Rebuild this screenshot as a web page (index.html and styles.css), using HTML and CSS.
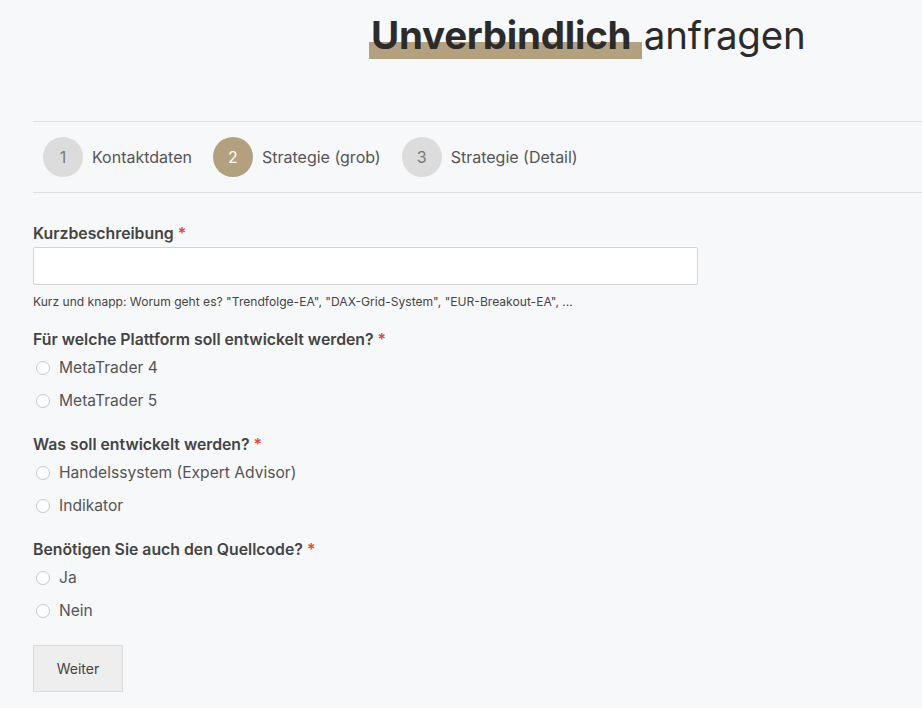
FILE: index.html
```html
<!DOCTYPE html>
<html lang="de">
  <head>
    <meta charset="UTF-8" />
    <meta name="viewport" content="width=device-width, initial-scale=1" />
    <title>Unverbindlich anfragen</title>
    <link rel="stylesheet" href="styles.css">
  </head>
  <body>
    <h1 class="title"><span class="mark">Unverbindlich</span> anfragen</h1>

    <!-- Schritte -->
    <div class="steps">
      <div class="step">
        <span class="num">1</span>
        <span class="step-label">Kontaktdaten</span>
      </div>
      <div class="step active">
        <span class="num">2</span>
        <span class="step-label">Strategie (grob)</span>
      </div>
      <div class="step">
        <span class="num">3</span>
        <span class="step-label">Strategie (Detail)</span>
      </div>
    </div>

    <form class="form">
      <div class="field">
        <label class="label" for="kurz">Kurzbeschreibung <span class="req">*</span></label>
        <input id="kurz" class="input" type="text" />
        <div class="help">Kurz und knapp: Worum geht es? "Trendfolge-EA", "DAX-Grid-System", "EUR-Breakout-EA", ...</div>
      </div>

      <div class="field">
        <div class="label">Für welche Plattform soll entwickelt werden? <span class="req">*</span></div>
        <label class="radio"><input type="radio" name="platform" /> MetaTrader 4</label>
        <label class="radio"><input type="radio" name="platform" /> MetaTrader 5</label>
      </div>

      <div class="field">
        <div class="label">Was soll entwickelt werden? <span class="req">*</span></div>
        <label class="radio"><input type="radio" name="typ" /> Handelssystem (Expert Advisor)</label>
        <label class="radio"><input type="radio" name="typ" /> Indikator</label>
      </div>

      <div class="field">
        <div class="label">Benötigen Sie auch den Quellcode? <span class="req">*</span></div>
        <label class="radio"><input type="radio" name="code" /> Ja</label>
        <label class="radio"><input type="radio" name="code" /> Nein</label>
      </div>

      <button type="button" class="btn">Weiter</button>
    </form>
  </body>
</html>
```

FILE: styles.css
```css
html {
  font-size: 16px;
}
body {
  font-family: Inter, "Noto Sans", Arial, sans-serif;
  margin: 0;
  padding: 0 0 0 33px;
  background: #f7f8fa;
  color: #444;
}
.title {
  margin: 0;
  padding: 14px 0 0 338px;
  height: 109px;
  box-sizing: border-box;
  font-size: 38.5px;
  font-weight: 400;
  line-height: 42px;
  color: #2b2b2b;
  letter-spacing: -0.25px;
}
.mark {
  position: relative;
  font-weight: 700;
  margin-right: 2px;
}
.mark::after {
  content: "";
  position: absolute;
  left: -2px;
  right: -11px;
  top: 30px;
  height: 17px;
  background: #b3a07f;
  z-index: -1;
}

/* ----- Schritte ----- */
.steps {
  display: flex;
  align-items: center;
  gap: 21px;
  height: 70px;
  padding-left: 10px;
  border-top: 1px solid #dedfe2;
  border-bottom: 1px solid #dedfe2;
  margin-top: 12px;
}
.step {
  display: flex;
  align-items: center;
  gap: 9px;
}
.num {
  width: 40px;
  height: 40px;
  border-radius: 50%;
  background: #dcdcdc;
  color: #777;
  display: flex;
  align-items: center;
  justify-content: center;
  font-size: 16px;
}
.step.active .num {
  background: #b3a07f;
  color: #fff;
}
.step-label {
  font-size: 16px;
  color: #555;
}

/* ----- Formular ----- */
.form {
  padding-top: 31px;
}
.field {
  margin-bottom: 18px;
}
.label {
  display: block;
  font-size: 15.8px;
  font-weight: 600;
  color: #444;
  margin-bottom: 2px;
}
.req {
  color: #d9503c;
}
.input {
  display: block;
  width: 665px;
  height: 38px;
  box-sizing: border-box;
  border: 1px solid #d3d4d7;
  border-radius: 2px;
  background: #fff;
  margin-top: 4px;
}
.help {
  font-size: 12.1px;
  color: #444;
  margin-top: 9px;
  padding-bottom: 3px;
}
.radio {
  display: flex;
  align-items: center;
  gap: 9px;
  height: 33px;
  padding-left: 3px;
  font-size: 15.6px;
  color: #555;
}
.radio input {
  appearance: none;
  width: 14px;
  height: 14px;
  margin: 0;
  border: 1px solid #c8c9cc;
  border-radius: 50%;
  background: #fff;
}
.btn {
  margin-top: 0;
  width: 90px;
  height: 47px;
  font-family: inherit;
  font-size: 14px;
  color: #444;
  background: #eeeeee;
  border: 1px solid #dadbdd;
  border-radius: 0;
}
```
